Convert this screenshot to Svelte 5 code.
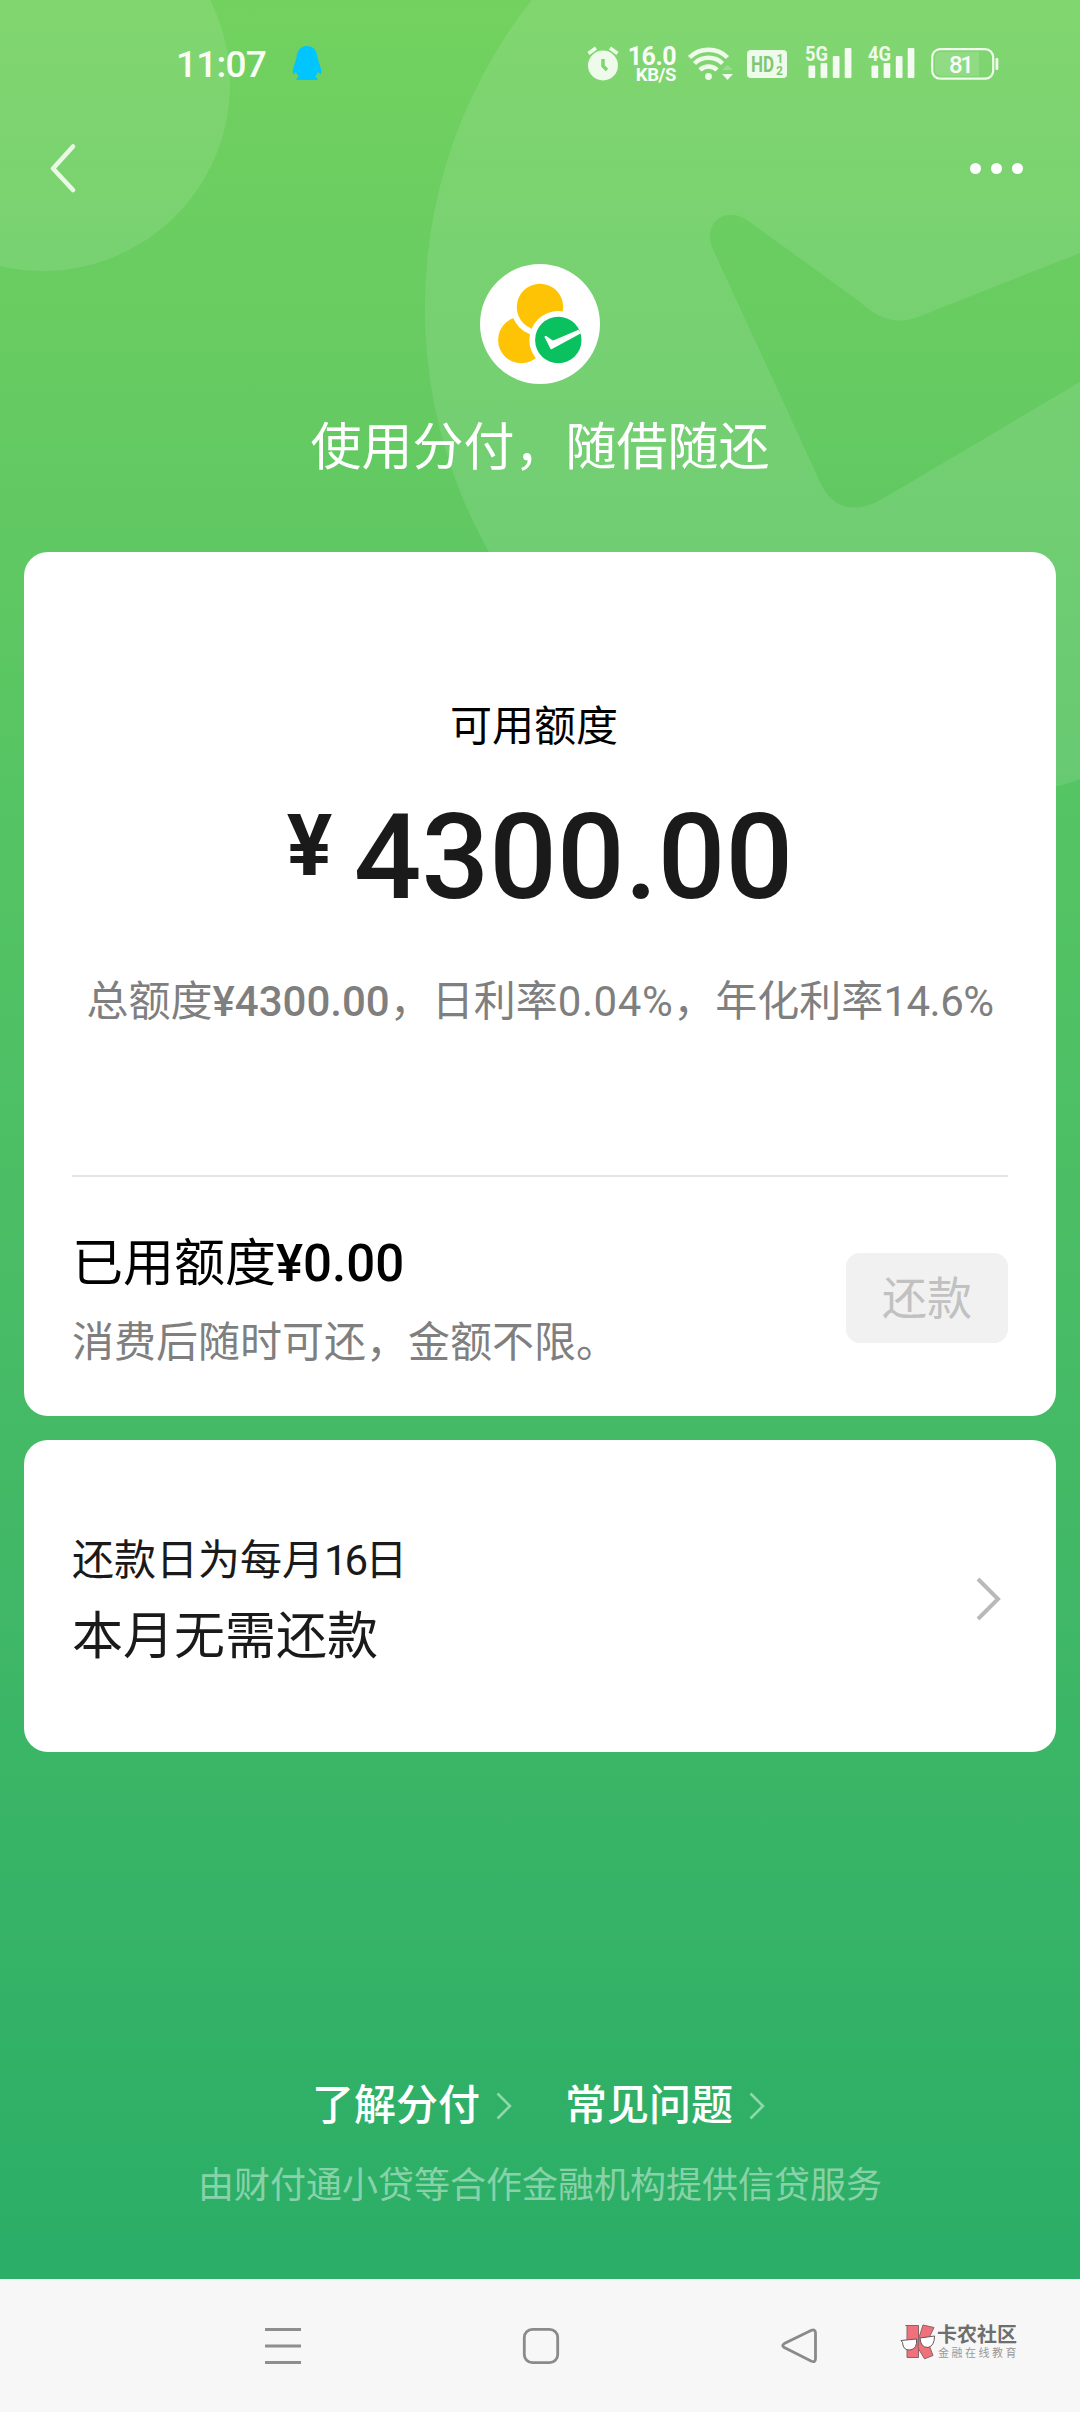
<script>
  const total = { quota: '¥4300.00', daily: '0.04%', yearly: '14.6%' };
  const links = ['了解分付', '常见问题'];
  const networks = ['5G', '4G'];
</script>

<div class="page" lang="zh-CN">
  <svg class="decor" width="1080" height="800" viewBox="0 0 1080 800" aria-hidden="true">
    <circle cx="43" cy="84" r="187" />
    <path
      fill-rule="evenodd"
      d="M922 -189a497 497 0 1 0 0 994a497 497 0 1 0 0-994Z
         M712 247C703 222 726 206 747 220L860 302Q889 329 918 317L1080 253L1420 120V170L1080 382L877 502Q838 519 821 484Z"
    />
  </svg>

  <header class="status">
    <span class="clock">11:07</span>
    <svg class="penguin" width="30" height="36" viewBox="0 0 30 36">
      <path fill="#00c5ff" d="M15 1C8 1 5 6 4.500 13L1 24q-.8 6 1 5l2-2q1 3 3 4.500Q4 33 4.500 35h21q.5-2-2.500-3.500 2-1.500 3-4.500l2 2q2 1 1-5L25.500 13C25 6 22 1 15 1Z" />
    </svg>

    <div class="indicators">
      <svg width="34" height="36" viewBox="0 0 34 36" class="alarm">
        <circle cx="17" cy="20.500" r="15" fill="#effbea" />
        <path d="M2.500 8.500 10 3M31.500 8.500 24 3" stroke="#effbea" stroke-width="3.500" />
        <path d="M17 14v7l4 4" fill="none" stroke="#7fd570" stroke-width="3.500" />
      </svg>
      <div class="speed"><b>16.0</b><small>KB/S</small></div>
      <svg class="wifi" width="46" height="36" viewBox="0 0 46 36">
        <g fill="none" stroke="#effbea" stroke-width="4.500">
          <path d="M1.500 12.500a27 27 0 0 1 38 0" />
          <path d="M6.500 18.500a20 20 0 0 1 28 0" />
          <path d="M12 25a12 12 0 0 1 17 0" />
        </g>
        <circle cx="20.500" cy="31.500" r="3.400" fill="#effbea" />
        <path d="M34 29h11l-5.500 6z" fill="#effbea" />
        <path d="M34 25h11l-5.500-5z" fill="#effbea" opacity=".25" />
      </svg>
      <svg class="hd" width="40" height="28" viewBox="0 0 40 28">
        <rect width="40" height="28" rx="4" fill="#effbea" />
        <g fill="#7fc774" font-family="Roboto, sans-serif" font-weight="700">
          <text x="4" y="21.500" font-size="22" textLength="23" lengthAdjust="spacingAndGlyphs">HD</text>
          <text x="29.500" y="12.500" font-size="12">1</text>
          <text x="29" y="24.500" font-size="12">2</text>
        </g>
      </svg>
      {#each networks as name}
        <svg class="signal" width="48" height="44" viewBox="0 -10 48 44">
          <text x="0" y="16" font-size="21" font-weight="700" font-family="Roboto, sans-serif" fill="#effbea" textLength="23" lengthAdjust="spacingAndGlyphs">{name}</text>
          <g fill="#f4fcf1">
            <rect x="3.500" y="20.500" width="6.700" height="12.500" rx="1" />
            <rect x="15.600" y="18" width="6.700" height="15" rx="1" />
            <rect x="27.800" y="11" width="6.700" height="22" rx="1" />
            <rect x="39.700" y="3" width="6.700" height="30" rx="1" />
          </g>
        </svg>
      {/each}
      <svg class="battery" width="68" height="32" viewBox="0 0 68 32">
        <rect x="1.200" y="1.200" width="61" height="29.500" rx="8" fill="none" stroke="#effbea" stroke-width="2.200" />
        <path d="M9 4h39v24H9a5 5 0 0 1-5-5V9a5 5 0 0 1 5-5Z" fill="#fff" opacity=".14" />
        <rect x="64.500" y="10" width="2.800" height="12" rx="1.200" fill="#effbea" />
        <text x="18" y="24.500" font-size="24" font-weight="500" font-family="Roboto, sans-serif" fill="#f6fdf3" textLength="25">81</text>
      </svg>
    </div>
  </header>

  <nav class="bar">
    <svg width="30" height="52" viewBox="0 0 30 52">
      <path d="M24 4.500 4 26.500 24 48" fill="none" stroke="#e9f9e4" stroke-width="4.600" stroke-linecap="round" stroke-linejoin="round" />
    </svg>
    <div class="dots"><i></i><i></i><i></i></div>
  </nav>

  <section class="hero">
    <svg width="120" height="120" viewBox="0 0 120 120">
      <circle cx="60" cy="60" r="60" fill="#fff" />
      <circle cx="41.300" cy="76" r="23.200" fill="#ffc305" />
      <circle cx="60" cy="43" r="29" fill="#fff" />
      <circle cx="60" cy="43" r="23.200" fill="#ffc305" />
      <circle cx="78.300" cy="76" r="29" fill="#fff" />
      <circle cx="78.300" cy="76" r="23.200" fill="#0ac160" />
      <path fill="#fff" d="M64.500 73q0-1.500 1.800-.9l5.700 4q1 .6 2.500 0L98.500 65.800l2.500 3.500L72 85q-1 .8-1.700-.4Z" />
    </svg>
    <h1>使用分付，随借随还</h1>
  </section>

  <section class="card quota">
    <p class="label">可用额度</p>
    <p class="amount"><span class="yen">¥</span><span class="num">4300.00</span></p>
    <p class="rates">总额度<b>{total.quota}</b>，日利率<span class="loose">{total.daily}</span>，年化利率<span class="tight">{total.yearly}</span></p>
    <div class="used">
      <div>
        <p class="big">已用额度<b>¥0.00</b></p>
        <p class="hint">消费后随时可还，金额不限。</p>
      </div>
      <button disabled>还款</button>
    </div>
  </section>

  <section class="card due">
    <div>
      <p class="date">还款日为每月<span>16</span>日</p>
      <p class="big">本月无需还款</p>
    </div>
    <svg width="28" height="46" viewBox="0 0 28 46">
      <path d="M4 3 24 23 4 43" fill="none" stroke="#b9b9b9" stroke-width="4" />
    </svg>
  </section>

  <footer>
    <div class="links">
      {#each links as link}
        <span class="link">
          {link}
          <svg width="16" height="30" viewBox="0 0 16 30">
            <path d="M1.500 2.500 14 15 1.500 27.500" fill="none" stroke="#8ed8a9" stroke-width="2.600" />
          </svg>
        </span>
      {/each}
    </div>
    <p>由财付通小贷等合作金融机构提供信贷服务</p>
  </footer>

  <div class="sysnav">
    <svg width="38" height="38" viewBox="0 0 38 38">
      <path d="M1 2.500h36M1 19h36M1 35.500h36" stroke="#8e8e8e" stroke-width="3" />
    </svg>
    <svg width="38" height="38" viewBox="0 0 38 38">
      <rect x="2.300" y="2.300" width="33.400" height="33.400" rx="8" fill="none" stroke="#8a8a8a" stroke-width="2.800" />
    </svg>
    <svg width="38" height="38" viewBox="0 0 38 38">
      <path d="M31.500 3.300 4.300 16.600q-3.200 2 0 4L31.500 34.300q4 1.400 4-2.600V6q0-4-4-2.700Z" fill="none" stroke="#8a8a8a" stroke-width="2.800" />
    </svg>
    <div class="mark">
      <svg width="36" height="36" viewBox="0 0 36 36">
        <g fill="#f0707c" stroke="#8b6468" stroke-width="1">
          <path d="M5.500 1.500h13v32H7V1.500Z" />
          <path d="M18.500 15 23 1l11 2.500-6.500 13.500 5.500 14.500-8.500 3.300L18 24Z" />
        </g>
        <g fill="#fff" stroke="#66585a" stroke-width="1">
          <path d="M1 16.500 16.500 15Q17.500 25 10 26 3 26.500 2.500 18.500Z" />
          <path d="M20 14 34.500 12Q34.500 22 28 23.500 20.500 23.500 20 14Z" />
        </g>
      </svg>
      <div class="marktext"><b>卡农社区</b><small>金融在线教育</small></div>
    </div>
  </div>
</div>

<style>
  :global(body) {
    margin: 0;
  }
  .page {
    position: relative;
    display: flex;
    flex-direction: column;
    width: 1080px;
    height: 2412px;
    overflow: hidden;
    font-family: Roboto, 'Noto Sans CJK SC', sans-serif;
    background: linear-gradient(#73d25f 0, #6acd61 250px, #62c962 500px, #55c463 800px, #45ba66 1430px, #2bae67 2260px);
  }
  p,
  h1 {
    margin: 0;
    font-weight: 400;
    white-space: nowrap;
  }
  svg {
    display: block;
    flex: none;
  }
  .decor {
    position: absolute;
    top: 0;
    left: 0;
    fill: rgba(255, 255, 255, 0.1);
  }
  .status,
  .bar,
  .hero,
  .card,
  footer,
  .sysnav {
    position: relative;
    flex: none;
    box-sizing: border-box;
  }
  .status {
    display: flex;
    align-items: flex-start;
    height: 128px;
    padding: 45px 81px 0 176px;
    color: #f8fef6;
  }
  .clock {
    width: 116px;
    font-size: 37px;
    font-weight: 500;
    line-height: 39px;
    letter-spacing: -0.8px;
  }
  .indicators {
    display: flex;
    margin-left: auto;
  }
  .speed {
    display: flex;
    flex-direction: column;
    align-items: flex-end;
    width: 57px;
    margin-right: 12px;
  }
  .speed b {
    font-size: 25px;
    font-weight: 700;
    line-height: 23px;
    letter-spacing: -0.5px;
  }
  .speed small {
    font-size: 18.5px;
    font-weight: 700;
    line-height: 15px;
    letter-spacing: -0.4px;
  }
  .alarm {
    margin-right: -1px;
  }
  .hd {
    margin: 5px 18px 0 13px;
  }
  .signal {
    margin: -10px 15px 0 0;
  }
  .battery {
    margin: 3px 0 0 0;
  }
  .bar {
    display: flex;
    align-items: center;
    justify-content: space-between;
    height: 80px;
    padding: 0 57px 0 49px;
  }
  .dots {
    display: flex;
    gap: 10px;
  }
  .dots i {
    width: 11px;
    height: 11px;
    border-radius: 50%;
    background: #fff;
  }
  .hero {
    display: flex;
    flex-direction: column;
    align-items: center;
    height: 344px;
    padding-top: 56px;
  }
  h1 {
    margin-top: 29px;
    font-size: 51px;
    line-height: 70px;
    color: #fff;
  }
  .card {
    margin: 0 24px 24px;
    border-radius: 24px;
    background: #fff;
  }
  .quota {
    display: flex;
    flex-direction: column;
    align-items: center;
    height: 864px;
    padding: 145px 48px 0;
  }
  .label {
    font-size: 42px;
    line-height: 60px;
    color: #000;
    transform: translateX(-6px);
  }
  .amount {
    display: flex;
    margin-top: 41px;
    font-weight: 500;
    line-height: 120px;
    color: #1a1a1a;
  }
  .yen {
    width: 50px;
    margin-right: 17px;
    font-size: 85px;
    font-weight: 700;
    line-height: 97px;
  }
  .num {
    font-size: 119px;
    letter-spacing: 0.1px;
  }
  .rates {
    margin-top: 54px;
    font-size: 42px;
    line-height: 60px;
    color: #7f7f7f;
  }
  b {
    font-weight: 500;
  }
  .loose {
    letter-spacing: 0.6px;
  }
  .tight {
    letter-spacing: -0.5px;
  }
  .used {
    display: flex;
    align-items: center;
    justify-content: space-between;
    align-self: stretch;
    margin-top: 143px;
    padding-top: 51px;
    border-top: 2px solid #e5e5e5;
  }
  .big {
    font-size: 51px;
    line-height: 72px;
    color: #000;
  }
  .hint {
    margin-top: 13px;
    font-size: 42px;
    line-height: 60px;
    color: #7f7f7f;
  }
  button {
    width: 162px;
    height: 90px;
    margin-bottom: 5px;
    padding: 3px 0 0;
    border: 0;
    border-radius: 14px;
    font: 45px/87px Roboto, 'Noto Sans CJK SC', sans-serif;
    color: #c1c1c1;
    background: #f1f1f1;
  }
  .due {
    display: flex;
    align-items: center;
    justify-content: space-between;
    height: 312px;
    padding: 6px 54px 0 48px;
  }
  .date {
    margin: 6px 0 10px;
    font-size: 42px;
    line-height: 60px;
    color: #1a1a1a;
  }
  .date span {
    letter-spacing: -3px;
  }
  .due .big {
    color: #1a1a1a;
  }
  footer {
    display: flex;
    flex: 1;
    flex-direction: column;
    align-items: center;
    padding-top: 300px;
  }
  .links {
    display: flex;
    gap: 53px;
    margin-right: 3px;
  }
  .link {
    display: flex;
    align-items: center;
    gap: 16px;
    font-size: 42px;
    font-weight: 500;
    line-height: 60px;
    color: #fff;
  }
  footer p {
    margin-top: 21px;
    font-size: 36px;
    line-height: 58px;
    color: rgba(255, 255, 255, 0.45);
  }
  .sysnav {
    display: flex;
    align-items: center;
    height: 133px;
    padding: 0 60px 0 264px;
    border-top: 1px solid #e6fbee;
    background: #f7f7f7;
  }
  .sysnav > svg {
    margin-right: 220px;
  }
  .sysnav > svg:nth-child(3) {
    margin-right: 82px;
  }
  .mark {
    display: flex;
    gap: 1px;
    margin-bottom: 8px;
  }
  .marktext {
    display: flex;
    flex-direction: column;
  }
  .marktext b {
    font-size: 20px;
    font-weight: 700;
    line-height: 23px;
    color: #6e6e6e;
  }
  .marktext small {
    margin: 0 0 0 1px;
    font-size: 11px;
    line-height: 13px;
    letter-spacing: 2.5px;
    white-space: nowrap;
    color: #999;
  }
</style>
